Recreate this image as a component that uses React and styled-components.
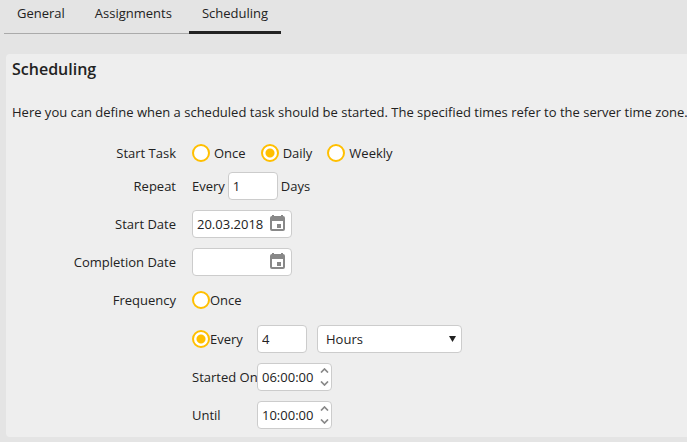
import React, { useState } from "react";
import styled, { createGlobalStyle } from "styled-components";

const GlobalStyle = createGlobalStyle`
  * {
    box-sizing: border-box;
  }
  body {
    margin: 0;
    background-color: #e4e4e4;
    color: #222;
    font-family: "Open Sans", "Noto Sans", sans-serif;
    font-size: 13px;
    line-height: 18px;
  }
  input, select, button {
    font: inherit;
    color: inherit;
  }
`;

const Page = styled.div`
  padding: 0 0 5px 4px;
  overflow: hidden;
`;

const Tabs = styled.nav`
  display: flex;
  width: fit-content;
  gap: 4px;
  background: linear-gradient(#aaa, #aaa) bottom / 100% 1px no-repeat;
`;

const Tab = styled.button`
  height: 34px;
  padding: 0 13px 6px;
  border: none;
  border-bottom: 3px solid
    ${(props) => (props.$active ? "#222" : "transparent")};
  background: none;
  cursor: pointer;
`;

const Panel = styled.section`
  margin: 20px 0 0 2px;
  padding: 5px 6px 8px;
  border-radius: 4px 0 0 4px;
  background-color: #eee;
`;

const Title = styled.h1`
  margin: 0;
  font-size: 16px;
  font-weight: 600;
  line-height: 20px;
`;

const Description = styled.p`
  margin: 24px 0 23px;
  white-space: nowrap;
`;

const Form = styled.form`
  display: grid;
  grid-template-columns: 164px 1fr;
  column-gap: 16px;
  row-gap: 10px;
  align-items: center;
`;

const RowLabel = styled.label`
  grid-column: 1;
  text-align: right;
`;

const Row = styled.div`
  grid-column: 2;
  display: flex;
  align-items: center;
  gap: ${(props) => props.$gap || 0}px;
  min-height: ${(props) => props.$height || 28}px;
`;

const SubLabel = styled.label`
  width: 65px;
  white-space: nowrap;
`;

const RadioLabel = styled.label`
  display: flex;
  align-items: center;
  gap: ${(props) => (props.$tight ? 0 : 4)}px;
  min-width: ${(props) => (props.$tight ? 65 : 0)}px;
`;

const Radio = styled.input`
  appearance: none;
  flex: none;
  width: 18px;
  height: 18px;
  margin: 0;
  border: 2px solid #ffbf00;
  border-radius: 50%;
  background-color: #fff;
  &:checked {
    background-image: radial-gradient(circle, #ffbf00 4px, transparent 5px);
  }
`;

const Input = styled.input`
  width: ${(props) => props.$width || 50}px;
  height: 28px;
  padding: 0 4px;
  border: 1px solid #ccc;
  border-radius: 4px;
  background-color: #fff;
`;

const Field = styled.div`
  position: relative;
  display: flex;
`;

const IconButton = styled.button`
  position: absolute;
  top: 5px;
  right: 7px;
  display: flex;
  padding: 0;
  border: none;
  background: none;
  color: #888;
`;

const Spinner = styled.div`
  position: absolute;
  top: 5px;
  right: 3px;
  display: flex;
  flex-direction: column;
  gap: 8px;
`;

const SpinButton = styled.button`
  display: flex;
  padding: 0;
  border: none;
  background: none;
  color: #888;
`;

const Select = styled.select`
  appearance: none;
  width: 145px;
  height: 28px;
  padding: 0 20px 0 8px;
  border: 1px solid #ccc;
  border-radius: 4px;
  background-color: #fff;
`;

const SelectArrow = styled.svg`
  position: absolute;
  top: 11px;
  right: 6px;
  pointer-events: none;
`;

const DateField = ({ id, value, onChange }) => (
  <Field>
    <Input
      id={id}
      $width={100}
      value={value}
      onChange={(e) => onChange(e.target.value)}
    />
    <IconButton type="button" aria-label="Open calendar">
      <svg width="15" height="16" viewBox="0 0 15 16">
        <path
          fill="currentColor"
          fillRule="evenodd"
          d="M2 0h2v1h7V0h2v1a2 2 0 0 1 2 2v11a2 2 0 0 1-2 2H2a2 2 0 0 1-2-2V3a2 2 0 0 1 2-2zM2 6v8h11V6zM7 9h4v4H7z"
        />
      </svg>
    </IconButton>
  </Field>
);

const TimeField = ({ id, value, onChange }) => (
  <Field>
    <Input
      id={id}
      $width={75}
      value={value}
      onChange={(e) => onChange(e.target.value)}
    />
    <Spinner>
      <SpinButton type="button" aria-label="Increase">
        <svg width="9" height="5" viewBox="0 0 9 5">
          <path d="M1 4.5 4.5 1 8 4.5" fill="none" stroke="currentColor" strokeWidth="1.7" />
        </svg>
      </SpinButton>
      <SpinButton type="button" aria-label="Decrease">
        <svg width="9" height="5" viewBox="0 0 9 5">
          <path d="M1 .5 4.5 4 8 .5" fill="none" stroke="currentColor" strokeWidth="1.7" />
        </svg>
      </SpinButton>
    </Spinner>
  </Field>
);

const tabs = ["General", "Assignments", "Scheduling"];
const startOptions = ["Once", "Daily", "Weekly"];

const App = () => {
  const [tab, setTab] = useState("Scheduling");
  const [startTask, setStartTask] = useState("Daily");
  const [days, setDays] = useState("1");
  const [startDate, setStartDate] = useState("20.03.2018");
  const [completionDate, setCompletionDate] = useState("");
  const [frequency, setFrequency] = useState("every");
  const [interval, setInterval] = useState("4");
  const [startedOn, setStartedOn] = useState("06:00:00");
  const [until, setUntil] = useState("10:00:00");

  return (
    <>
      <GlobalStyle />
      <Page>
        <Tabs>
          {tabs.map((name) => (
            <Tab key={name} $active={tab === name} onClick={() => setTab(name)}>
              {name}
            </Tab>
          ))}
        </Tabs>
        <Panel>
          <Title>Scheduling</Title>
          <Description>
            Here you can define when a scheduled task should be started. The
            specified times refer to the server time zone.
          </Description>
          <Form>
            <RowLabel as="span" id="start-task">Start Task</RowLabel>
            <Row $gap={15} $height={18} role="radiogroup" aria-labelledby="start-task">
              {startOptions.map((option) => (
                <RadioLabel key={option}>
                  <Radio
                    type="radio"
                    name="startTask"
                    checked={startTask === option}
                    onChange={() => setStartTask(option)}
                  />
                  {option}
                </RadioLabel>
              ))}
            </Row>

            <RowLabel htmlFor="days">Repeat</RowLabel>
            <Row $gap={3}>
              <span>Every</span>
              <Input id="days" value={days} onChange={(e) => setDays(e.target.value)} />
              <span>Days</span>
            </Row>

            <RowLabel htmlFor="start-date">Start Date</RowLabel>
            <Row>
              <DateField id="start-date" value={startDate} onChange={setStartDate} />
            </Row>

            <RowLabel htmlFor="completion-date">Completion Date</RowLabel>
            <Row>
              <DateField
                id="completion-date"
                value={completionDate}
                onChange={setCompletionDate}
              />
            </Row>

            <RowLabel as="span">Frequency</RowLabel>
            <Row>
              <RadioLabel $tight>
                <Radio
                  type="radio"
                  name="frequency"
                  checked={frequency === "once"}
                  onChange={() => setFrequency("once")}
                />
                Once
              </RadioLabel>
            </Row>

            <Row $height={29}>
              <RadioLabel $tight>
                <Radio
                  type="radio"
                  name="frequency"
                  checked={frequency === "every"}
                  onChange={() => setFrequency("every")}
                />
                Every
              </RadioLabel>
              <Row $gap={10}>
                <Input
                  aria-label="Interval"
                  value={interval}
                  onChange={(e) => setInterval(e.target.value)}
                />
                <Field>
                  <Select aria-label="Unit" defaultValue="Hours">
                    <option>Minutes</option>
                    <option>Hours</option>
                  </Select>
                  <SelectArrow width="7" height="6" viewBox="0 0 7 6">
                    <path d="M0 0h7L3.5 6z" fill="#222" />
                  </SelectArrow>
                </Field>
              </Row>
            </Row>

            <Row>
              <SubLabel htmlFor="started-on">Started On</SubLabel>
              <TimeField id="started-on" value={startedOn} onChange={setStartedOn} />
            </Row>

            <Row>
              <SubLabel htmlFor="until">Until</SubLabel>
              <TimeField id="until" value={until} onChange={setUntil} />
            </Row>
          </Form>
        </Panel>
      </Page>
    </>
  );
};

export default App;
